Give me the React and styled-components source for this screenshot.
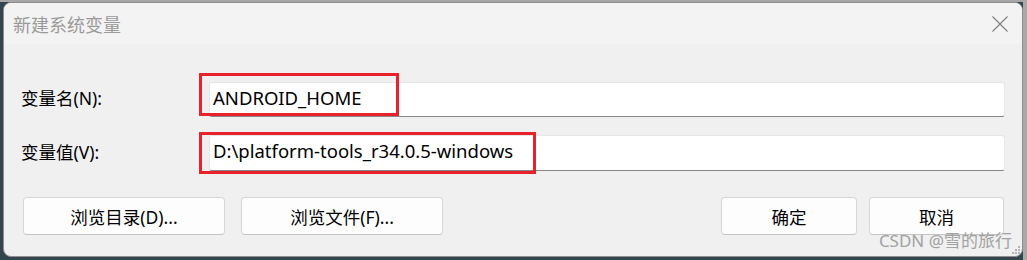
import React from 'react';
import styled, { createGlobalStyle } from 'styled-components';

const Global = createGlobalStyle`
  html, body { margin: 0; padding: 0; background: #34464d; }
  body { font-family: "Noto Sans", "Noto Sans CJK SC", sans-serif; color: #000; }
  * { box-sizing: border-box; }
`;

const Frame = styled.div`
  width: 1027px;
  height: 260px;
  padding: 2px 4px 3px 3px;
  display: flex;
  background:
    linear-gradient(to left, #a9a9a9 0 4px, transparent 4px),
    linear-gradient(#a6a6a6 0 2px, #34464d 2px);
`;

const Dialog = styled.div`
  position: relative;
  flex: 1;
  display: flex;
  flex-direction: column;
  border: 1px solid #8e8e8e;
  border-radius: 8px;
  overflow: hidden;
  background: #f0f0f0;
`;

const TitleBar = styled.div`
  height: 41px;
  display: flex;
  align-items: center;
  padding: 0 14px 0 9px;
  background: #f3f3f3;
`;

const Title = styled.span`
  font-size: 18px;
  color: #9a9a9a;
  font-family: "Noto Sans CJK SC", sans-serif;
`;

const Close = styled.button`
  margin-left: auto;
  width: 16px;
  height: 16px;
  padding: 0;
  border: 0;
  background: none;
  display: flex;
`;

const Body = styled.div`
  flex: 1;
  padding: 38px 17px 0 17px;
  display: flex;
  flex-direction: column;
`;

const Fields = styled.div`
  display: grid;
  grid-template-columns: 188px 1fr;
  row-gap: 18px;
`;

const Label = styled.label`
  font-size: 17.5px;
  display: flex;
  align-items: center;
  padding-bottom: 4px;
`;

const Input = styled.div`
  position: relative;
  height: ${p => p.$h}px;
  display: flex;
  align-items: center;
  padding: 0 0 5px 3px;
  background: #fff;
  border: 1px solid #e6e6e6;
  border-bottom-color: #878787;
  border-radius: 3px;
  font-size: 18.5px;
  font-family: "Noto Sans", sans-serif;
`;

const Highlight = styled.div`
  position: absolute;
  left: -11px;
  top: ${p => p.$top}px;
  width: ${p => p.$w}px;
  height: ${p => p.$h}px;
  border: 3px solid #e8212b;
  pointer-events: none;
`;

const Buttons = styled.div`
  margin-top: 26px;
  display: flex;
  gap: 16px;
  padding: 0 1px 0 2px;
`;

const Spacer = styled.div`
  flex: 1;
`;

const Button = styled.button`
  width: ${p => p.$w}px;
  height: 38px;
  margin-left: ${p => p.$ml || 0}px;
  background: #fdfdfd;
  border: 1px solid #d6d6d6;
  border-bottom-color: #c4c4c4;
  border-radius: 4px;
  font-size: 17.5px;
  font-family: "Noto Sans", "Noto Sans CJK SC", sans-serif;
  color: #000;
  padding: 0;
`;

const Watermark = styled.div`
  position: absolute;
  right: 10px;
  bottom: 4px;
  font-size: 17px;
  color: #a2a2a2;
  font-family: "Noto Sans", "Noto Sans CJK SC", sans-serif;
  pointer-events: none;
`;

const Grip = styled.svg`
  position: absolute;
  right: 1px;
  bottom: 1px;
`;

export default function App() {
  return (
    <>
      <Global />
      <Frame>
        <Dialog>
          <TitleBar>
            <Title>新建系统变量</Title>
            <Close aria-label="关闭">
              <svg width="16" height="16" viewBox="0 0 16 16">
                <path d="M0.5 0.5 L15.5 15.5 M15.5 0.5 L0.5 15.5" stroke="#7d7d7d" strokeWidth="1.1" fill="none" />
              </svg>
            </Close>
          </TitleBar>
          <Body>
            <Fields>
              <Label>变量名(N):</Label>
              <Input $h={35}>
                ANDROID_HOME
                <Highlight $top={-10} $w={200} $h={43} />
              </Input>
              <Label>变量值(V):</Label>
              <Input $h={36}>
                D:\platform-tools_r34.0.5-windows
                <Highlight $top={-4} $w={337} $h={42} />
              </Input>
            </Fields>
            <Buttons>
              <Button $w={202}>浏览目录(D)...</Button>
              <Button $w={202}>浏览文件(F)...</Button>
              <Spacer />
              <Button $w={136}>确定</Button>
              <Button $w={135} $ml={-4}>取消</Button>
            </Buttons>
          </Body>
          <Watermark>CSDN @雪的旅行</Watermark>
          <Grip width="10" height="10" viewBox="0 0 10 10">
            <g fill="#b4b4b4">
              <rect x="7" y="1" width="2" height="2" />
              <rect x="4" y="4" width="2" height="2" />
              <rect x="7" y="4" width="2" height="2" />
              <rect x="1" y="7" width="2" height="2" />
              <rect x="4" y="7" width="2" height="2" />
              <rect x="7" y="7" width="2" height="2" />
            </g>
          </Grip>
        </Dialog>
      </Frame>
    </>
  );
}
